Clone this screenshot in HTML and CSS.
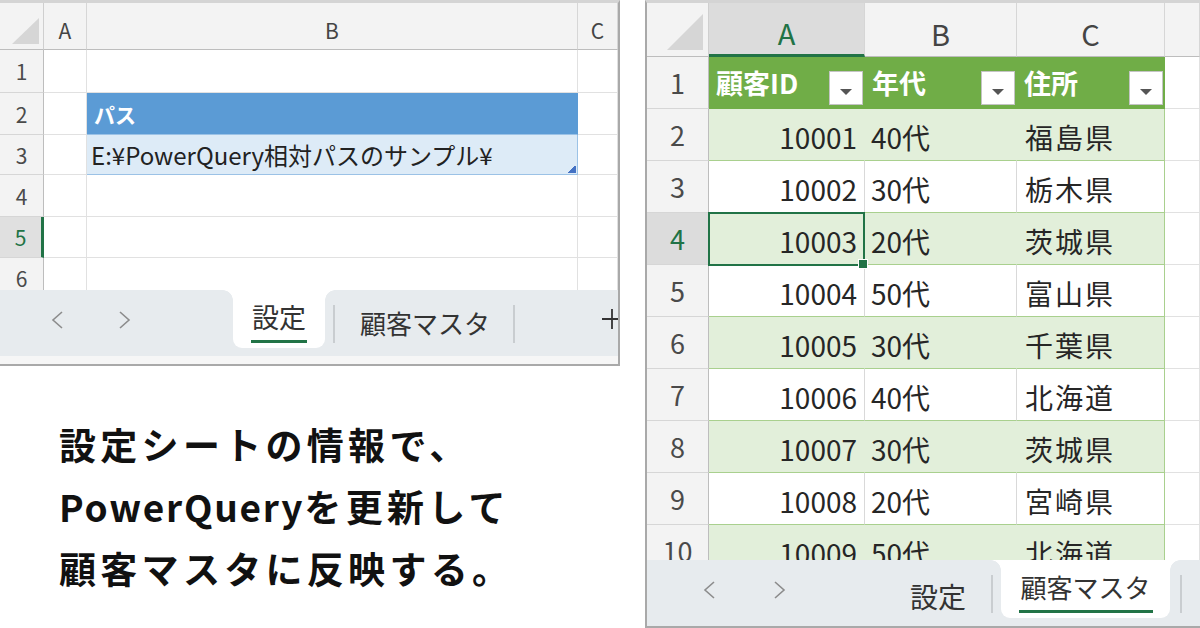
FILE: index.html
```html
<!DOCTYPE html>
<html lang="ja">
<head>
<meta charset="utf-8">
<link rel="stylesheet" href="styles.css">
</head>
<body>
<div class="page">
  <div class="left-col">
    <div class="sheet sheet-left">
      <div class="grid-wrap wrap-left">
        <div class="grid grid-left">
          <div class="cell corner"><svg width="30" height="28" viewBox="0 0 30 28"><polygon points="2,27 29,27 29,1" fill="#d6d6d6"/></svg></div>
          <div class="cell ch">A</div>
          <div class="cell ch">B</div>
          <div class="cell ch">C</div>

          <div class="cell rh">1</div><div class="cell"></div><div class="cell"></div><div class="cell"></div>
          <div class="cell rh">2</div><div class="cell"></div><div class="cell bhead">パス</div><div class="cell"></div>
          <div class="cell rh">3</div><div class="cell"></div><div class="cell bband">E:¥PowerQuery相対パスのサンプル¥<span class="handle"></span></div><div class="cell"></div>
          <div class="cell rh">4</div><div class="cell"></div><div class="cell"></div><div class="cell"></div>
          <div class="cell rh rh-sel-left">5</div><div class="cell"></div><div class="cell"></div><div class="cell"></div>
          <div class="cell rh">6</div><div class="cell"></div><div class="cell"></div><div class="cell"></div>
        </div>
      </div>
      <div class="tabbar tabbar-left">
        <div class="nav nav-left">
          <svg width="14" height="20" viewBox="0 0 14 20"><polyline points="12,2 3,10 12,18" fill="none" stroke="#8c8c8c" stroke-width="1.6"/></svg>
          <svg width="14" height="20" viewBox="0 0 14 20"><polyline points="2,2 11,10 2,18" fill="none" stroke="#8c8c8c" stroke-width="1.6"/></svg>
        </div>
        <div class="tab active tab-left-active"><span class="tab-label">設定</span></div>
        <div class="sep sep-l1"></div>
        <div class="tab inactive tab-left-2">顧客マスタ</div>
        <div class="sep sep-l2"></div>
        <div class="plus"><svg width="22" height="22" viewBox="0 0 22 22"><path d="M11 1V21M1 11H21" stroke="#333" stroke-width="1.8"/></svg></div>
      </div>
      <div class="bottom-strip"></div>
    </div>
    <div class="caption">
      <p>設定シートの情報で、</p>
      <p><span class="latin">PowerQuery</span>を更新して</p>
      <p>顧客マスタに反映する。</p>
    </div>
  </div>

  <div class="sheet sheet-right">
    <div class="grid-wrap wrap-right">
      <div class="grid grid-right">
        <div class="cell corner"><svg width="40" height="40" viewBox="0 0 40 40"><polygon points="2,38 38,38 38,2" fill="#d6d6d6"/></svg></div>
        <div class="cell ch ch-sel">A</div>
        <div class="cell ch">B</div>
        <div class="cell ch">C</div>
        <div class="cell ch"></div>

        <div class="cell rh">1</div>
        <div class="cell thead">顧客ID<span class="fbtn"><i></i></span></div>
        <div class="cell thead">年代<span class="fbtn"><i></i></span></div>
        <div class="cell thead">住所<span class="fbtn"><i></i></span></div>
        <div class="cell"></div>

        <div class="cell rh">2</div><div class="cell num band">10001</div><div class="cell band">40代</div><div class="cell band pref">福島県</div><div class="cell"></div>
        <div class="cell rh">3</div><div class="cell num plain">10002</div><div class="cell plain">30代</div><div class="cell plain pref">栃木県</div><div class="cell"></div>
        <div class="cell rh rh-sel">4</div><div class="cell num band active-cell">10003</div><div class="cell band">20代</div><div class="cell band pref">茨城県</div><div class="cell"></div>
        <div class="cell rh">5</div><div class="cell num plain">10004</div><div class="cell plain">50代</div><div class="cell plain pref">富山県</div><div class="cell"></div>
        <div class="cell rh">6</div><div class="cell num band">10005</div><div class="cell band">30代</div><div class="cell band pref">千葉県</div><div class="cell"></div>
        <div class="cell rh">7</div><div class="cell num plain">10006</div><div class="cell plain">40代</div><div class="cell plain pref">北海道</div><div class="cell"></div>
        <div class="cell rh">8</div><div class="cell num band">10007</div><div class="cell band">30代</div><div class="cell band pref">茨城県</div><div class="cell"></div>
        <div class="cell rh">9</div><div class="cell num plain">10008</div><div class="cell plain">20代</div><div class="cell plain pref">宮崎県</div><div class="cell"></div>
        <div class="cell rh">10</div><div class="cell num band">10009</div><div class="cell band">50代</div><div class="cell band pref">北海道</div><div class="cell"></div>
      </div>
    </div>
    <div class="tabbar tabbar-right">
      <div class="nav nav-right">
        <svg width="14" height="20" viewBox="0 0 14 20"><polyline points="12,2 3,10 12,18" fill="none" stroke="#8c8c8c" stroke-width="1.6"/></svg>
        <svg width="14" height="20" viewBox="0 0 14 20"><polyline points="2,2 11,10 2,18" fill="none" stroke="#8c8c8c" stroke-width="1.6"/></svg>
      </div>
      <div class="tab inactive tab-right-1">設定</div>
      <div class="sep sep-r1"></div>
      <div class="tab active tab-right-active"><span class="tab-label">顧客マスタ</span></div>
      <div class="sep sep-r2"></div>
    </div>
  </div>
</div>
</body>
</html>
```

FILE: styles.css
```css
* { box-sizing: border-box; margin: 0; padding: 0; }
html, body { width: 1200px; height: 628px; overflow: hidden; background: #fff; }
body { font-family: "Noto Sans CJK JP", "Noto Sans", sans-serif; color: #262626; }

.page { display: flex; align-items: flex-start; }
.left-col { width: 645px; flex: none; display: flex; flex-direction: column; }

.sheet { background: #fff; display: flex; flex-direction: column; overflow: hidden; flex: none; }

/* ---------- left sheet ---------- */
.sheet-left {
  width: 620px; height: 366px;
  border-top: 3px solid #d4d4d4;
  border-right: 2px solid #a9a9a9;
  border-bottom: 2px solid #a9a9a9;
}
.grid-wrap { overflow: hidden; flex: none; }
.wrap-left { height: 287px; }
.grid { display: grid; }
.grid-left {
  grid-template-columns: 44px 43px 491px 40px;
  grid-template-rows: 47px 43px 42px 40px 42px 41px 41px;
  font-size: 21px;
}
.cell {
  border-right: 1px solid #e1e1e1;
  border-bottom: 1px solid #e1e1e1;
  display: flex; align-items: center;
  white-space: nowrap; overflow: hidden;
  position: relative;
}
.corner { background: #f3f3f3; border-right: 1px solid #cfcfcf; border-bottom: 1px solid #bdbdbd; justify-content: flex-end; align-items: flex-end; padding: 0 3px 4px 0; }
.ch { background: #f3f3f3; border-right: 1px solid #d6d6d6; border-bottom: 1px solid #bdbdbd; justify-content: center; color: #444; padding-top: 8px; }
.rh { background: #f3f3f3; border-right: 1px solid #bdbdbd; border-bottom: 1px solid #d6d6d6; justify-content: center; color: #4a4a4a; }
.rh-sel-left { background: #e0e0e0; color: #217346; border-right: 3px solid #217346; }

.bhead { background: #5b9bd5; color: #fff; font-weight: 700; font-size: 21px; padding-left: 7px; border-right-color: #5b9bd5; border-bottom: 1px solid #9bc2e6; }
.bband { background: #ddebf7; font-size: 24px; padding-left: 4px; border-right-color: #9bc2e6; border-bottom: 1px solid #9bc2e6; color: #222; }
.handle { position: absolute; right: 1px; bottom: 1px; width: 9px; height: 7px; background: linear-gradient(135deg, transparent 50%, #4472c4 50%); }

/* tab bars */
.tabbar { height: 66px; background: #e7ebee; display: flex; align-items: flex-start; flex: none; overflow: hidden; }
.tabbar > * { flex: none; }
.nav { display: flex; align-items: center; height: 60px; }
.nav-left { width: 233px; padding-left: 50px; gap: 54px; }
.tab { font-size: 26px; color: #333; white-space: nowrap; }
.tab.active {
  background: #fff; height: 58px; border-radius: 0 0 9px 9px;
  display: flex; justify-content: center; align-items: flex-start;
  position: relative; padding-top: 9px;
}
.tab.active::before, .tab.active::after {
  content: ""; position: absolute; top: 0; width: 10px; height: 10px;
}
.tab.active::before { left: -10px; background: radial-gradient(circle at 0 100%, #e7ebee 9.5px, #fff 10px); }
.tab.active::after { right: -10px; background: radial-gradient(circle at 100% 100%, #e7ebee 9.5px, #fff 10px); }
.tab-label { position: relative; padding-bottom: 6px; border-bottom: 3px solid #217346; line-height: 35px; }
.tab-left-active { width: 92px; font-size: 27px; }
.tab-left-active .tab-label { padding: 0 1px 6px; }
.inactive { padding-top: 15px; line-height: 35px; }
.sep { width: 2px; height: 38px; background: #c9cdd0; margin-top: 15px; }
.sep-l1 { margin-left: 8px; }
.tab-left-2 { margin-left: 25px; }
.sep-l2 { margin-left: 23px; }
.plus { margin-left: 86px; margin-top: 18px; }

.bottom-strip { height: 8px; background: #f6f6f6; flex: none; }

/* caption */
.caption { margin-top: 47px; padding-left: 59px; font-weight: 700; font-size: 37px; letter-spacing: 4.3px; line-height: 62px; color: #111; }
.caption .latin { letter-spacing: 1.8px; }

/* ---------- right sheet ---------- */
.sheet-right {
  width: 555px; height: 628px;
  border-top: 3px solid #d4d4d4;
  border-left: 2px solid #a9a9a9;
  border-bottom: 2px solid #a9a9a9;
}
.wrap-right { height: 557px; }
.grid-right {
  grid-template-columns: 62px 156px 152px 148px 35px;
  grid-template-rows: 54px repeat(10, 52px);
  font-size: 28px;
}
.grid-right .ch { font-size: 29px; padding-top: 6px; }
.grid-right .rh { font-size: 27px; }
.ch-sel { background: #dcdcdc; color: #217346; border-bottom: 3px solid #217346; }
.rh-sel { background: #dcdcdc; color: #217346; }

.thead {
  background: #70ad47; color: #fff; font-weight: 700; font-size: 27px;
  padding-left: 7px; justify-content: space-between;
  border-right: none; border-bottom: 1px solid #70ad47;
}
.fbtn {
  align-self: flex-end; margin: 0 2px 3px 0;
  width: 34px; height: 34px; background: #fff; border: 1px solid #c4c4c4;
  display: flex; align-items: center; justify-content: center; padding-top: 8px;
}
.fbtn i { width: 0; height: 0; border-left: 6px solid transparent; border-right: 6px solid transparent; border-top: 6px solid #555; }

.band { background: #e2efda; border-bottom: 1px solid #a9d08e; border-right: 1px solid #e2efda; padding-top: 5px; }
.plain { background: #fff; border-bottom: 1px solid #a9d08e; border-right: 1px solid #d9d9d9; padding-top: 5px; }
.band, .plain { padding-left: 6px; }
.num { justify-content: flex-end; padding-right: 7px; padding-left: 0; }
.pref { padding-left: 8px; letter-spacing: 2px; }
.band.pref, .plain.pref { border-right: 1px solid #a9d08e; }

.active-cell { overflow: visible; z-index: 2; }
.active-cell::after {
  content: ""; position: absolute; left: -1px; top: -1px; right: -1px; bottom: -2px;
  border: 2.5px solid #217346;
}
.active-cell::before {
  content: ""; position: absolute; right: -4px; bottom: -5px; width: 8px; height: 8px;
  background: #217346; border: 1px solid #fff; z-index: 3;
}

.nav-right { width: 241px; padding-left: 55px; gap: 57px; }
.tab-right-1 { margin-left: 22px; font-size: 28px; padding-top: 19px; }
.sep-r1 { margin-left: 25px; }
.tab-right-active { margin-left: 8px; width: 169px; padding-top: 9px; }
.tab-right-active .tab-label { padding: 0 2px 6px; }
.sep-r2 { margin-left: 10px; }
```
